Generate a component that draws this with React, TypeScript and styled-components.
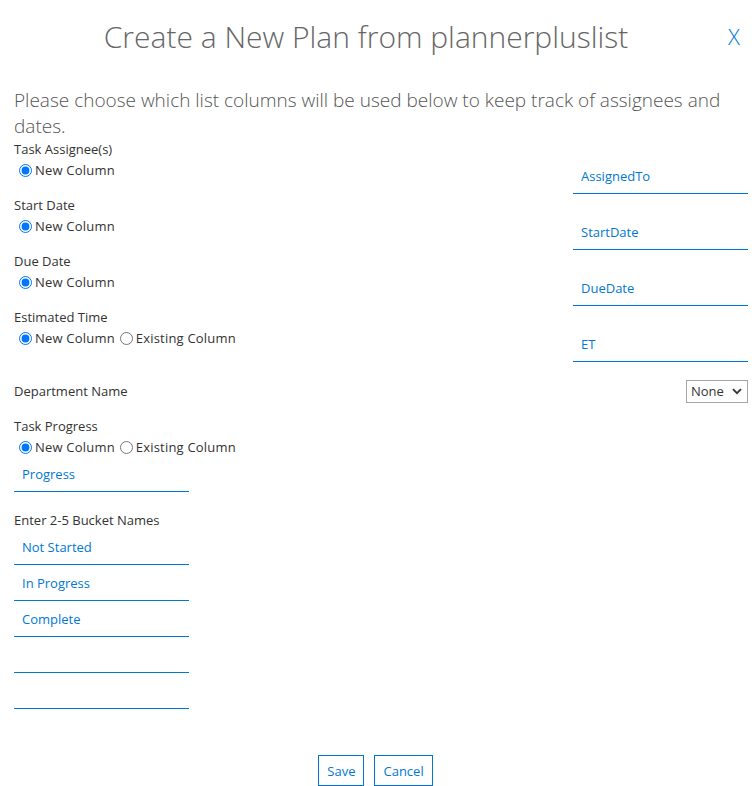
import React from "react";
import styled, { createGlobalStyle } from "styled-components";

const Global = createGlobalStyle`
  html, body { margin: 0; padding: 0; background: #fff; }
  body { font-family: "Open Sans", "Noto Sans", sans-serif; color: #333; }
  * { box-sizing: border-box; }
`;

const Page = styled.div`
  width: 752px;
  padding: 0 4px 0 14px;
`;

const Header = styled.div`
  display: flex;
  align-items: center;
  height: 72px;
`;

const Title = styled.h1`
  flex: 1;
  margin: 0;
  text-align: center;
  font-size: 30px;
  font-weight: 300;
  color: #666;
  padding-right: 4px;
`;

const Close = styled.span`
  color: #0078d4;
  font-size: 22px;
  font-weight: 300;
  width: 24px;
  margin-right: 2px;
  text-align: center;
`;

const Intro = styled.p`
  margin: 15px 0 0;
  font-size: 19px;
  line-height: 26px;
  font-weight: 300;
  color: #555;
`;

const FieldRow = styled.div`
  display: grid;
  grid-template-columns: 1fr 175px;
  height: 56px;
`;

const Label = styled.div<{ $tight?: boolean }>`
  font-size: 13px;
  line-height: 21px;
  color: #333;
  margin-bottom: ${(p) => (p.$tight ? -2 : 0)}px;
`;

const RadioLine = styled.div`
  display: flex;
  align-items: center;
  font-size: 13px;
  line-height: 21px;
  letter-spacing: 0.2px;
  color: #333;
`;

const Radio = styled.input.attrs({ type: "radio" })`
  margin: 0 3px 0 5px;
  width: 13px;
  height: 13px;
`;

const TextInput = styled.input<{ $top?: number }>`
  display: block;
  width: 175px;
  height: 36px;
  margin-top: ${(p) => p.$top ?? 0}px;
  border: none;
  border-bottom: 1px solid #0078d4;
  padding: 0 8px;
  font-family: inherit;
  font-size: 13px;
  color: #0078d4;
  outline: none;
  background: transparent;
`;

const SelectRow = styled.div`
  display: flex;
  justify-content: space-between;
  align-items: center;
  height: 46px;
  margin-top: 5px;
`;

const SelectWrap = styled.div`
  position: relative;
  display: flex;
`;

const Select = styled.select`
  appearance: none;
  -webkit-appearance: none;
  font-family: inherit;
  font-size: 13px;
  color: #333;
  width: 62px;
  height: 23px;
  border: 1px solid #a6a6a6;
  border-radius: 0;
  background: #fff;
  padding: 0 18px 0 4px;
  outline: none;
`;

const Chevron = styled.svg`
  position: absolute;
  right: 6px;
  top: 8px;
  pointer-events: none;
`;

const Section = styled.div<{ $top: number }>`
  margin-top: ${(p) => p.$top}px;
`;

const Buttons = styled.div`
  display: flex;
  justify-content: center;
  gap: 10px;
  margin-top: 46px;
  padding-right: 11px;
`;

const Button = styled.button`
  font-family: inherit;
  font-size: 13px;
  color: #0078d4;
  background: #fff;
  border: 1px solid #0078d4;
  height: 31px;
  padding: 0 8px;
`;

type Field = { label: string; value: string; existing?: boolean };

const fields: Field[] = [
  { label: "Task Assignee(s)", value: "AssignedTo" },
  { label: "Start Date", value: "StartDate" },
  { label: "Due Date", value: "DueDate" },
  { label: "Estimated Time", value: "ET", existing: true },
];

function RadioChoice({ name, existing }: { name: string; existing?: boolean }) {
  return (
    <RadioLine>
      <Radio name={name} defaultChecked />
      New Column
      {existing && (
        <>
          <Radio name={name} />
          Existing Column
        </>
      )}
    </RadioLine>
  );
}

export default function App() {
  return (
    <Page>
      <Global />
      <Header>
        <Title>Create a New Plan from plannerpluslist</Title>
        <Close>X</Close>
      </Header>
      <Intro>
        Please choose which list columns will be used below to keep track of assignees and
        dates.
      </Intro>
      {fields.map((f) => (
        <FieldRow key={f.label}>
          <div>
            <Label>{f.label}</Label>
            <RadioChoice name={f.label} existing={f.existing} />
          </div>
          <TextInput $top={19} defaultValue={f.value} />
        </FieldRow>
      ))}
      <SelectRow>
        <Label>Department Name</Label>
        <SelectWrap>
          <Select defaultValue="None">
            <option>None</option>
          </Select>
          <Chevron width="10" height="7" viewBox="0 0 10 7">
            <path d="M1 1.2 L5 5.2 L9 1.2" fill="none" stroke="#333" strokeWidth="1.8" />
          </Chevron>
        </SelectWrap>
      </SelectRow>
      <Section $top={2}>
        <Label>Task Progress</Label>
        <RadioChoice name="progress" existing />
        <TextInput $top={-2} defaultValue="Progress" />
      </Section>
      <Section $top={18}>
        <Label $tight>Enter 2-5 Bucket Names</Label>
        <TextInput defaultValue="Not Started" />
        <TextInput defaultValue="In Progress" />
        <TextInput defaultValue="Complete" />
        <TextInput defaultValue="" />
        <TextInput defaultValue="" />
      </Section>
      <Buttons>
        <Button>Save</Button>
        <Button>Cancel</Button>
      </Buttons>
    </Page>
  );
}
